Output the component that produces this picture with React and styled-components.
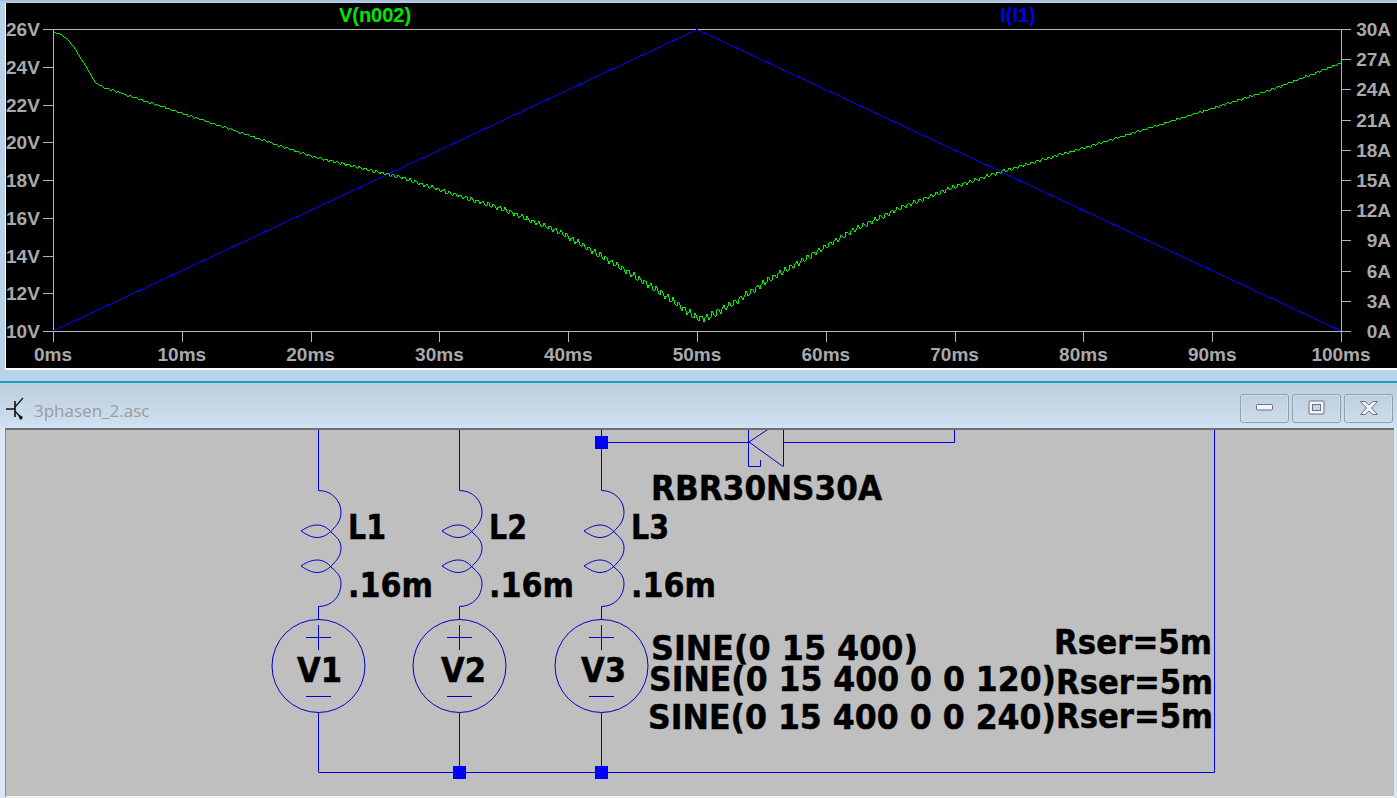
import styled, { createGlobalStyle } from "styled-components";

const GlobalStyle = createGlobalStyle`
  html, body {
    margin: 0;
    padding: 0;
    background: #b9d1ea;
    overflow: hidden;
  }
`;

const Page = styled.div`
  width: 1397px;
  height: 798px;
  display: flex;
  flex-flow: column;
  background: #b9d1ea;
`;

const PlotWindow = styled.div`
  height: 368px;
  padding: 3px 0 0 5px;
  background: linear-gradient(#a9bdd2, #b9d1ea 3px);
`;

const PlotPanel = styled.div`
  height: 365px;
  background: #000;
  border-bottom: 2px solid #fff;
  border-left: 1px solid #fff;
  box-sizing: content-box;
  svg {
    display: block;
  }
`;

const SchematicWindow = styled.div`
  margin-top: 10px;
  flex: 1;
  display: flex;
  flex-flow: column;
  border-top: 2px solid #1c9fc4;
  background: #d9e8f5;
`;

const TitleBar = styled.div`
  height: 45px;
  display: flex;
  align-items: center;
  padding: 6px 3px 0 6px;
  box-sizing: border-box;
  background: linear-gradient(#bccddc, #cfe1f2);
`;

const TitleText = styled.span`
  margin-left: 10px;
  margin-top: 3px;
  flex: 1;
  font: 17px "Open Sans", "Noto Sans", sans-serif;
  color: #9b9b9b;
`;

const WindowButtons = styled.div`
  display: flex;
  gap: 3px;
  margin-right: 1px;
  margin-top: -1px;
`;

const WindowButton = styled.div`
  width: 49px;
  height: 29px;
  box-sizing: border-box;
  display: flex;
  align-items: center;
  justify-content: center;
  border: 1px solid #8f9fb0;
  border-radius: 3px;
  background: linear-gradient(#bfcfe0, #cbdcec);
  box-shadow: inset 0 0 0 1px #d3e0ec;
`;

const SchematicPanel = styled.div`
  margin: 0 3px 0 5px;
  height: 366px;
  background: #bfbfbf;
  border-top: 2px solid #6e6e6e;
  border-left: 1px solid #8a8a8a;
  border-bottom: 2px solid #f0f0f0;
  svg {
    display: block;
  }
`;

const AxisText = styled.text`
  font: bold 19px "Liberation Sans", Arial, sans-serif;
  fill: #a9a9a9;
`;

const TraceTitle = styled.text`
  font: bold 20px "Liberation Sans", Arial, sans-serif;
  fill: ${(props) => props.$color};
  text-anchor: middle;
`;

const Label = styled.text`
  font: bold 34px "DejaVu Sans", Verdana, sans-serif;
  fill: #000;
  stroke: #000;
  stroke-width: 0.5px;
`;

const X0 = 53;
const X1 = 1341;
const Y0 = 29.5;
const Y1 = 331.5;

const voltTicks = [26, 24, 22, 20, 18, 16, 14, 12, 10];
const ampTicks = [30, 27, 24, 21, 18, 15, 12, 9, 6, 3, 0];
const timeTicks = [0, 10, 20, 30, 40, 50, 60, 70, 80, 90, 100];

// rough outline of V(n002) read off the plot
const outline = [
  [53, 32], [60, 33.5], [67, 39], [74, 47], [80, 57], [87, 68], [95, 82], [103, 87],
  [133, 97], [197, 118], [311, 156], [400, 177], [450, 193], [500, 208], [560, 232],
  [620, 267], [660, 292], [697, 318], [707, 318], [740, 299], [770, 279], [800, 262],
  [850, 232], [900, 208], [954, 187], [1000, 172], [1100, 143], [1200, 112], [1270, 90],
  [1341, 63],
];

const baseAt = (x) => {
  for (let i = 1; i < outline.length; i++) {
    if (x <= outline[i][0]) {
      const [ax, ay] = outline[i - 1];
      const [bx, by] = outline[i];
      return ay + ((by - ay) * (x - ax)) / (bx - ax);
    }
  }
  return 63;
};

const buildTrace = () => {
  const points = [];
  for (let x = X0; x <= X1; x += 1) {
    // ripple is strongest around the 50ms dip
    const dist = Math.abs(x - 700) / 640;
    const amp = x < 100 ? 0 : 0.7 + 2.4 * Math.max(0, 1 - dist * 1.5);
    const phase = ((x - X0) / 5.6) * Math.PI * 2;
    const ripple = (Math.sin(phase) + 0.35 * Math.sin(phase * 2.3)) * amp;
    points.push(`${x},${Math.round(baseAt(x) + ripple)}`);
  }
  return points.join(" ");
};

const tracePoints = buildTrace();

const Plot = () => (
  <svg width="1391" height="365" viewBox="6 3 1391 365">
    <TraceTitle x="375" y="22" $color="#00e800">V(n002)</TraceTitle>
    <TraceTitle x="1018" y="22" $color="#0000f0">I(I1)</TraceTitle>

    <g stroke="#b4b4b4" strokeWidth="1" fill="none" shapeRendering="crispEdges">
      <path d={`M43 ${Y0}H1351M43 ${Y1}H1351M${X0 + 0.5} ${Y0}V342M${X1 + 0.5} ${Y0}V342`} />
      {voltTicks.map((v, i) => {
        const y = Y0 + (i * (Y1 - Y0)) / 8;
        return <path key={v} d={`M43 ${y}H53`} />;
      })}
      {ampTicks.map((a, i) => {
        const y = Y0 + (i * (Y1 - Y0)) / 10;
        return <path key={a} d={`M1341 ${y}H1351`} />;
      })}
      {timeTicks.map((t) => {
        const x = Math.round(X0 + (t * (X1 - X0)) / 100) + 0.5;
        return <path key={t} d={`M${x} 331V342`} />;
      })}
    </g>

    {voltTicks.map((v, i) => (
      <AxisText key={v} x="6" y={Y0 + (i * (Y1 - Y0)) / 8 + 6.5}>
        {v}V
      </AxisText>
    ))}
    {ampTicks.map((a, i) => (
      <AxisText key={a} x="1391" y={Y0 + (i * (Y1 - Y0)) / 10 + 6.5} textAnchor="end">
        {a}A
      </AxisText>
    ))}
    {timeTicks.map((t) => (
      <AxisText key={t} x={X0 + (t * (X1 - X0)) / 100} y="361" textAnchor="middle">
        {t}ms
      </AxisText>
    ))}

    <polyline points={`${X0},331 697,29.5 ${X1},331`} fill="none" stroke="#0000ff" strokeWidth="1" shapeRendering="crispEdges" />
    <polyline points={tracePoints} fill="none" stroke="#00f000" strokeWidth="1" shapeRendering="crispEdges" />
  </svg>
);

const Lens = ({ x, y }) => (
  <path
    d={`M${x + 14} ${y + 2}C${x + 10} ${y - 3} ${x + 5} ${y - 6} ${x - 1} ${y - 6}C${x - 6} ${y - 6} ${x - 11} ${y - 4} ${x - 17} ${y}C${x - 11} ${y + 4} ${x - 6} ${y + 6.5} ${x - 1} ${y + 6.5}C${x + 6} ${y + 6.5} ${x + 12} ${y + 2} ${x + 16} ${y - 3}`}
  />
);

const Inductor = ({ x }) => (
  <g>
    <path d={`M${x + 0.5} 428V490.5`} />
    <path d={`M${x + 0.5} 490.5C${x + 14} 490.5 ${x + 23} 501 ${x + 23} 512C${x + 23} 519 ${x + 20} 524 ${x + 16} 528`} />
    <Lens x={x} y={531} />
    <path d={`M${x + 14} 533C${x + 20} 538 ${x + 23} 542 ${x + 23} 548C${x + 23} 554 ${x + 20} 559 ${x + 16} 563`} />
    <Lens x={x} y={566} />
    <path d={`M${x + 14} 568C${x + 20} 573 ${x + 23} 577 ${x + 23} 584C${x + 23} 596 ${x + 14} 606.5 ${x + 0.5} 606.5V620`} />
  </g>
);

const Source = ({ x }) => (
  <g>
    <circle cx={x + 0.5} cy="666" r="46.5" />
    <path d={`M${x - 12} 637.5H${x + 13}M${x + 0.5} 625V650M${x - 12} 696.5H${x + 13}M${x + 0.5} 713V772`} />
  </g>
);

const Junction = ({ x, y }) => <rect x={x - 6} y={y - 6} width="13" height="13" fill="#0000ff" stroke="none" />;

const phases = [
  { x: 318, name: "V1", coil: "L1", textX: 297 },
  { x: 459, name: "V2", coil: "L2", textX: 441 },
  { x: 601, name: "V3", coil: "L3", textX: 581 },
];

const Schematic = () => (
  <svg width="1388" height="362" viewBox="6 430 1388 362">
    <g fill="none" stroke="#0000c8" strokeWidth="1">
      {phases.map((p) => (
        <g key={p.name}>
          <Inductor x={p.x} />
          <Source x={p.x} />
        </g>
      ))}
      <path d="M748.5 428V466.5H760.5V460M749 442L770 428M749 442L783 466.5M783.5 428V466.5" />
      <path stroke="#0000f0" d="M601 442.5H749M783 442.5H954.5V428M318.5 772.5H1214.5V428" />
    </g>
    <Junction x={601} y={442} />
    <Junction x={459} y={772} />
    <Junction x={601} y={772} />

    {phases.map((p) => (
      <g key={p.coil}>
        <Label x={p.textX} y="682" textLength="45" lengthAdjust="spacingAndGlyphs">{p.name}</Label>
        <Label x={p.x + 30} y="539" textLength="38" lengthAdjust="spacingAndGlyphs">{p.coil}</Label>
        <Label x={p.x + 30} y="597" textLength="85" lengthAdjust="spacingAndGlyphs">.16m</Label>
      </g>
    ))}

    <Label x="651" y="500" textLength="231" lengthAdjust="spacingAndGlyphs">RBR30NS30A</Label>
    <Label x="651" y="660" textLength="267" lengthAdjust="spacingAndGlyphs">SINE(0 15 400)</Label>
    <Label x="649" y="691" textLength="407" lengthAdjust="spacingAndGlyphs">SINE(0 15 400 0 0 120)</Label>
    <Label x="648" y="729" textLength="408" lengthAdjust="spacingAndGlyphs">SINE(0 15 400 0 0 240)</Label>
    <Label x="1054" y="654" textLength="158" lengthAdjust="spacingAndGlyphs">Rser=5m</Label>
    <Label x="1056" y="694" textLength="157" lengthAdjust="spacingAndGlyphs">Rser=5m</Label>
    <Label x="1056" y="728" textLength="157" lengthAdjust="spacingAndGlyphs">Rser=5m</Label>
  </svg>
);

const TransistorIcon = () => (
  <svg width="18" height="24" viewBox="0 0 18 24">
    <g fill="none" stroke="#111" strokeWidth="1.2">
      <path d="M0 12H9M9 4V20" strokeWidth="1.6" />
      <path d="M9 10L17 1M9 14L16 22" />
    </g>
    <path d="M12 17L17 20L14 23Z" fill="#111" />
  </svg>
);

const MinimizeIcon = () => (
  <svg width="18" height="8" viewBox="0 0 18 8">
    <rect x="0.5" y="0.5" width="16" height="5.5" rx="1" fill="#f4f6f8" stroke="#68727c" />
  </svg>
);

const MaximizeIcon = () => (
  <svg width="18" height="16" viewBox="0 0 18 16">
    <rect x="1" y="1" width="15" height="13" rx="1" fill="#f2f4f6" stroke="#68727c" />
    <rect x="4.5" y="4.5" width="8" height="6" fill="#c5d5e4" stroke="#68727c" />
  </svg>
);

const CloseIcon = () => (
  <svg width="20" height="16" viewBox="0 0 20 16">
    <path
      d="M1.5 1.5H6L10 5L14 1.5H18.5L12.5 8L18.5 14.5H14L10 11L6 14.5H1.5L7.5 8Z"
      fill="#f4f6f8"
      stroke="#68727c"
      strokeLinejoin="round"
    />
  </svg>
);

const App = () => {
  return (
    <Page>
      <GlobalStyle />
      <PlotWindow>
        <PlotPanel>
          <Plot />
        </PlotPanel>
      </PlotWindow>
      <SchematicWindow>
        <TitleBar>
          <TransistorIcon />
          <TitleText>3phasen_2.asc</TitleText>
          <WindowButtons>
            <WindowButton>
              <MinimizeIcon />
            </WindowButton>
            <WindowButton>
              <MaximizeIcon />
            </WindowButton>
            <WindowButton>
              <CloseIcon />
            </WindowButton>
          </WindowButtons>
        </TitleBar>
        <SchematicPanel>
          <Schematic />
        </SchematicPanel>
      </SchematicWindow>
    </Page>
  );
};

export default App;
